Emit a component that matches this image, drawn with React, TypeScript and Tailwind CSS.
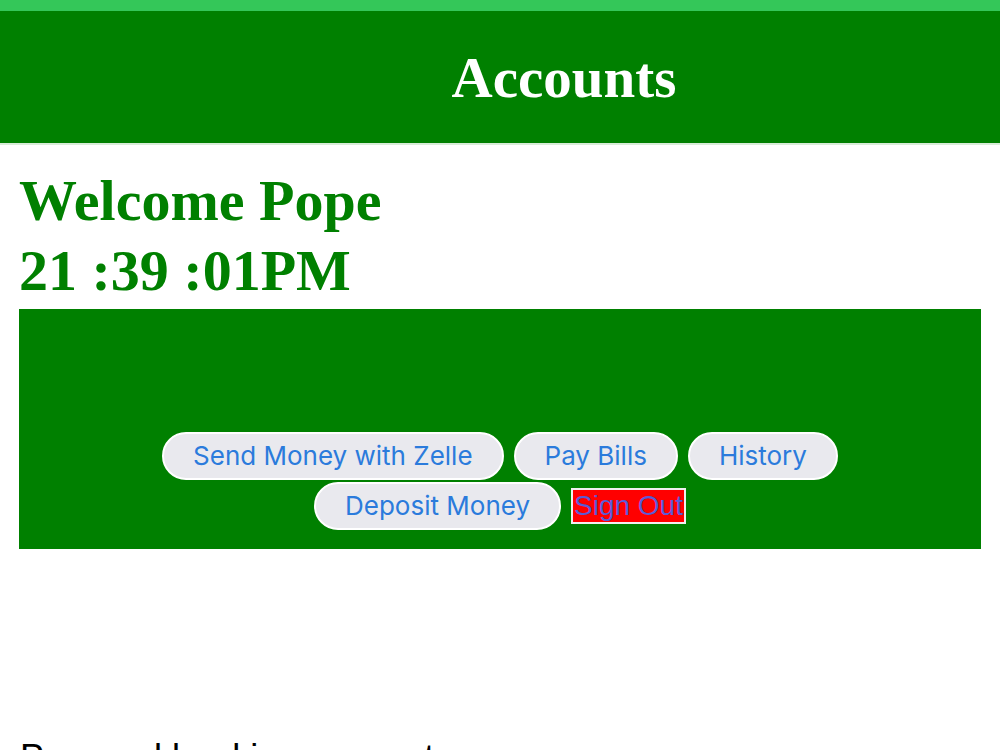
const actions = ["Send Money with Zelle", "Pay Bills", "History", "Deposit Money"];

const ActionButton = ({ label }: { label: string }) => (
  <button
    type="button"
    className="h-12 rounded-full border-2 border-white bg-[#e9e9ee] px-[29px] text-[26px] leading-none text-[#2b7bdc] font-['Inter',sans-serif]"
  >
    {label}
  </button>
);

const App = () => {
  return (
    <div className="min-h-[750px] overflow-hidden bg-white">
      {/* status bar */}
      <div className="h-[11px] bg-[#34c759]" />

      {/* title bar */}
      <header className="flex h-[134px] items-center justify-center border-b-2 border-[#d8ecd8] bg-[#008000] pl-[128px]">
        <h1 className="text-[57px] font-bold leading-none text-white font-['Liberation_Serif',serif]">
          Accounts
        </h1>
      </header>

      <section className="px-[19px] pt-[21px]">
        <h2 className="text-[58px] font-bold leading-[70px] text-[#008000] font-['Liberation_Serif',serif]">
          Welcome Pope
          <br />
          21 :39 :01PM
        </h2>

        <div className="mt-[3px] flex h-[240px] flex-col items-center justify-end bg-[#008000] pb-[19px]">
          <div className="flex flex-wrap justify-center gap-x-[10px] gap-y-[2px] w-[700px]">
            {actions.slice(0, 3).map((label) => (
              <ActionButton key={label} label={label} />
            ))}
          </div>
          <div className="mt-[2px] flex items-center gap-[10px]">
            <ActionButton label={actions[3]} />
            <button
              type="button"
              className="h-9 border-2 border-[#f0f0f0] bg-[#ff0000] px-[1px] text-[28px] leading-none text-[#5b5bd6] font-['Liberation_Sans',sans-serif]"
            >
              Sign Out
            </button>
          </div>
        </div>
      </section>

      <p className="mt-[191px] pl-[20px] text-[36px] leading-none text-black font-['Liberation_Sans',sans-serif]">
        Personal banking accounts
      </p>
    </div>
  );
};

export default App;
